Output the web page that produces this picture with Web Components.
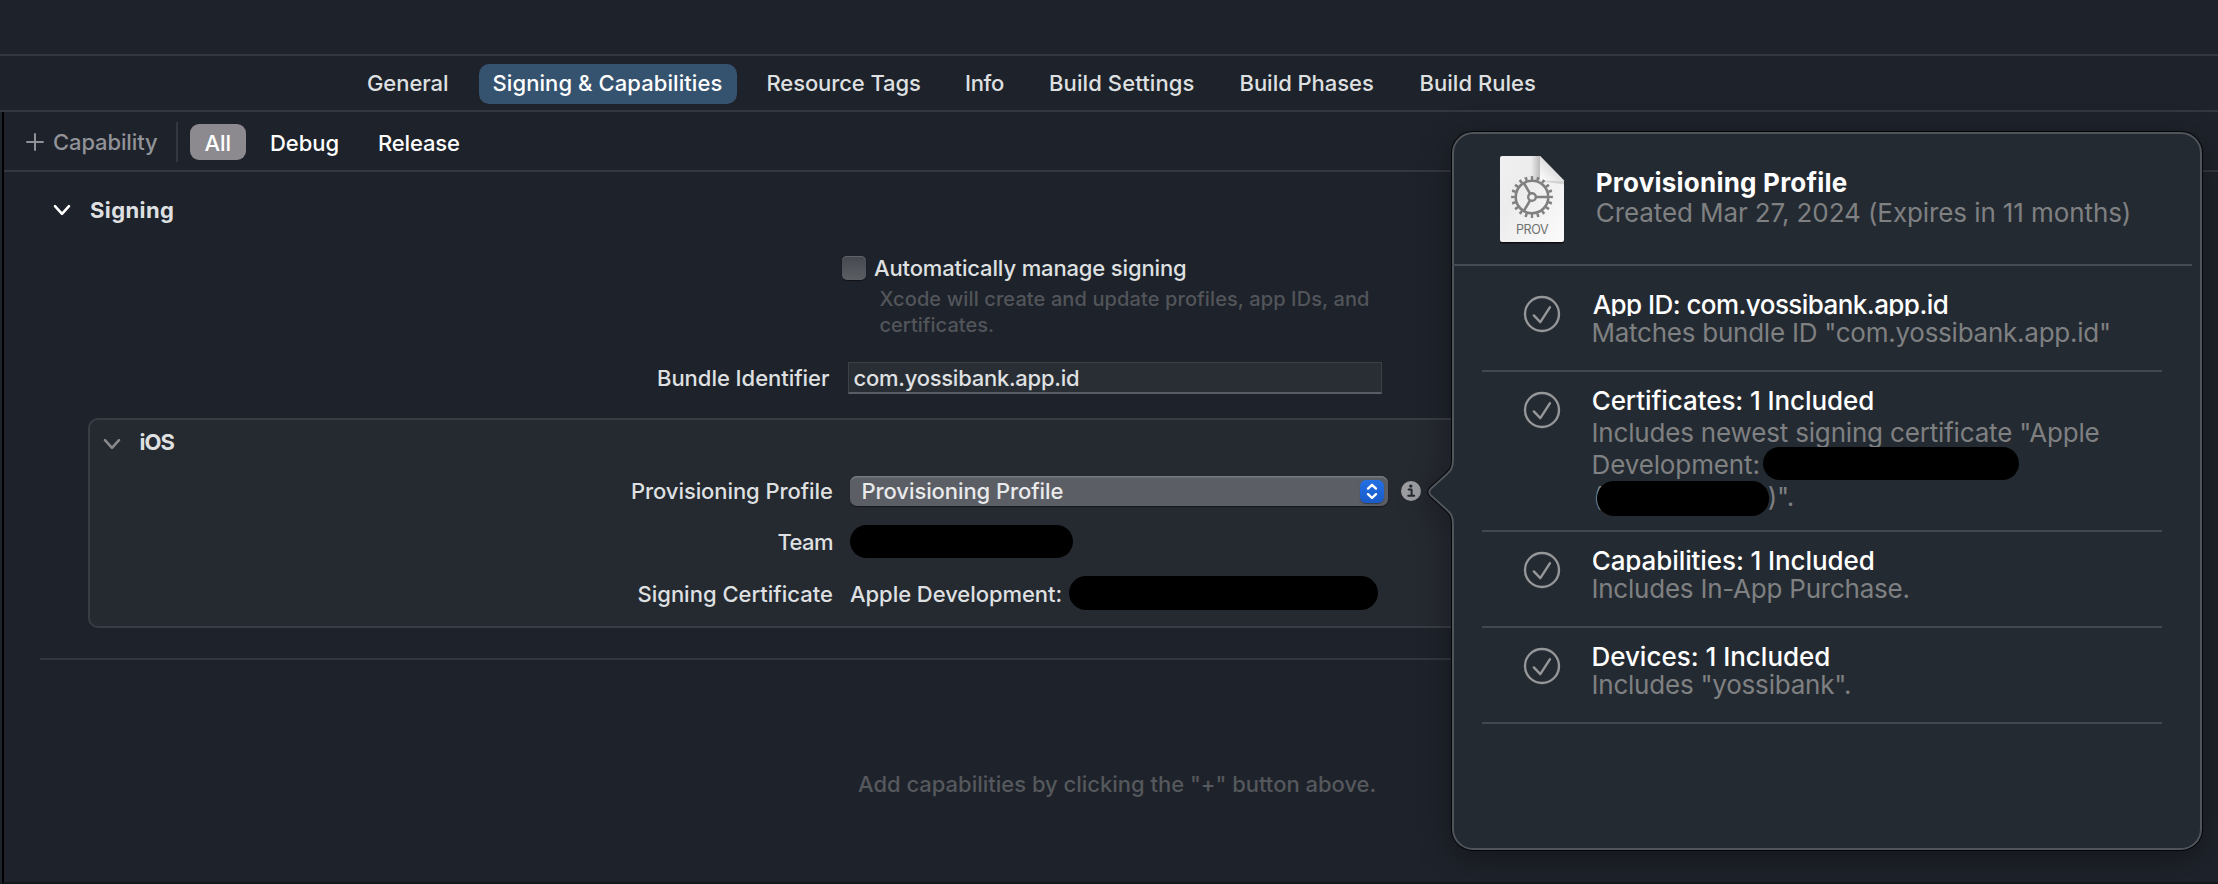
<!DOCTYPE html>
<html lang="en">
<head>
<meta charset="utf-8">
<title>Signing &amp; Capabilities</title>
<style>
html,body{margin:0;padding:0;background:#1e222a;overflow:hidden}
body{width:2218px;height:884px;font-family:Inter,"Liberation Sans",sans-serif;color:#dfe0e1}
</style>
</head>
<body>
<xc-window></xc-window>
<script>
const define = (name, markup, setup) => {
  const tpl = document.createElement('template');
  tpl.innerHTML = markup;
  customElements.define(name, class extends HTMLElement {
    connectedCallback() {
      if (this.shadowRoot) return;
      this.attachShadow({mode: 'open'}).append(tpl.content.cloneNode(true));
      if (setup) setup(this, this.shadowRoot);
    }
  });
};

/* One line of text, tracked so that its ink is exactly `w` pixels wide. */
const ctx = document.createElement('canvas').getContext('2d');
define('xc-label', `<style>
  :host{display:block;flex:none;white-space:nowrap;line-height:26px;height:26px;font-size:22px;font-weight:500}
  :host([big]){font-size:26px;line-height:31px;height:31px;font-weight:400}
  :host([small]){font-size:20px}
  :host([bold]){font-weight:700}
  :host([medium]){font-weight:500}
  span{display:inline-block;white-space:pre}
</style><span><slot></slot></span>`, (el, root) => {
  const w = +el.getAttribute('w'), text = el.textContent, span = root.querySelector('span');
  const cs = getComputedStyle(el);
  ctx.font = `${cs.fontWeight} ${cs.fontSize} ${cs.fontFamily}`;
  const m = ctx.measureText(text);
  const ink = m.actualBoundingBoxRight + m.actualBoundingBoxLeft;
  if (text.length > 1) span.style.letterSpacing = ((w - ink) / (text.length - 1)).toFixed(3) + 'px';
  span.style.marginLeft = m.actualBoundingBoxLeft.toFixed(2) + 'px';
  el.style.width = w + 'px';
});

define('xc-redacted', `<style>:host{display:block;flex:none;background:#000;border-radius:17px}</style>`);

define('xc-chevron', `<style>:host{display:block;flex:none;width:18px;height:12px}svg{display:block}</style>
<svg width="18" height="12" viewBox="0 0 18 12" fill="none" stroke="currentColor" stroke-width="2.6" stroke-linecap="round" stroke-linejoin="round"><path d="M2 2.2 9 9.8 16 2.2"/></svg>`);

define('xc-tab', `<style>
  :host{display:flex;align-items:center;box-sizing:border-box;height:40px;padding-bottom:2px;flex:none}
  :host([selected]){background:#35526f;border-radius:10px;color:#fff}
</style><slot></slot>`);

define('xc-tab-bar', `<style>
  :host{display:flex;align-items:flex-start;box-sizing:border-box;padding:8px 0 0 368px;border:solid #34373f;border-width:2px 0;height:58px}
</style>
<xc-tab><xc-label w="79">General</xc-label></xc-tab>
<xc-tab selected style="margin-left:32px;padding-left:14.5px;width:258px"><xc-label w="228">Signing &amp; Capabilities</xc-label></xc-tab>
<xc-tab style="margin-left:30.5px"><xc-label w="152.5">Resource Tags</xc-label></xc-tab>
<xc-tab style="margin-left:46px"><xc-label w="38">Info</xc-label></xc-tab>
<xc-tab style="margin-left:46px"><xc-label w="143.5">Build Settings</xc-label></xc-tab>
<xc-tab style="margin-left:47px"><xc-label w="132.5">Build Phases</xc-label></xc-tab>
<xc-tab style="margin-left:47.5px"><xc-label w="114.5">Build Rules</xc-label></xc-tab>`);

define('xc-filter-bar', `<style>
  :host{display:flex;align-items:flex-start;height:58px;border-bottom:2px solid #34373f;color:#fff}
  .plus{margin:21px 0 0 22px;width:18px;height:18px;flex:none}
  .cap{margin:17px 0 0 10px;color:#919398}
  .sep{width:2px;height:40px;margin:10px 0 0 18px;background:#34373f}
  .all{display:flex;box-sizing:border-box;width:56px;height:36px;margin:12px 0 0 12px;padding:6px 0 0 14.500px;background:#8c8a8f;border-radius:9px}
</style>
<svg class="plus" viewBox="0 0 18 18" stroke="#8f9196" stroke-width="2" stroke-linecap="round"><path d="M9 1v16M1 9h16"/></svg>
<xc-label class="cap" w="104">Capability</xc-label>
<div class="sep"></div>
<div class="all"><xc-label w="25">All</xc-label></div>
<xc-label style="margin:18px 0 0 25px" w="67.5">Debug</xc-label>
<xc-label style="margin:18px 0 0 40.5px" w="80">Release</xc-label>`);

define('xc-checkbox', `<style>
  :host{display:block;flex:none;box-sizing:border-box;width:24px;height:24px;border-radius:5px;background:linear-gradient(#45484e,#5b5e63);box-shadow:inset 0 1px 0 #606369,0 1px 1px #101216}
</style>`);

define('xc-popup-button', `<style>
  :host{display:flex;flex:none;box-sizing:border-box;width:538px;height:30px;padding:2px 0 0 13px;border-radius:7px;background:#5c5e66;box-shadow:inset 0 1.5px 0 #777980,0 1px 1px #15171b;color:#e9eaeb}
  .step{margin:4px 4px 0 auto;width:24px;height:23px;margin-top:2px;border-radius:6px;background:linear-gradient(#2470e4,#195bc8);box-shadow:0 1px 1px #3b3d44}
  svg{display:block}
</style><slot></slot>
<div class="step"><svg width="24" height="23" viewBox="0 0 24 23" fill="none" stroke="#fff" stroke-width="2.4" stroke-linecap="round" stroke-linejoin="round"><path d="M8 8.6 12 4.8l4 3.8M8 14.2l4 3.8 4-3.8"/></svg></div>`);

define('xc-info', `<style>:host{display:block;flex:none;width:20px;height:20px}svg{display:block}</style>
<svg width="20" height="20" viewBox="0 0 20 20"><circle cx="10" cy="10" r="10" fill="#9d9ea1"/><circle cx="9.8" cy="5.1" r="1.7" fill="#252930"/><path d="M7.6 8.6h3v6M7.2 14.7h6" fill="none" stroke="#252930" stroke-width="2" stroke-linejoin="round" stroke-linecap="round"/></svg>`);

define('xc-row', `<style>
  :host{display:grid;grid-template-columns:var(--label-end) 1fr;column-gap:18px;align-items:start}
  .l{display:flex;justify-content:flex-end}
  .c{display:flex;align-items:flex-start}
</style><div class="l"><slot name="label"></slot></div><div class="c"><slot></slot></div>`);

define('xc-signing', `<style>
  :host{display:block}
  .head{display:flex;align-items:flex-start;padding:25px 0 0 49px;color:#dfe0e1}
  .head xc-chevron{margin-top:6.500px;color:#fff}
  .head xc-label{margin-left:19px}
  .auto{display:flex;align-items:flex-start;margin:32px 0 0 838px}
  .auto xc-checkbox{margin-top:1px}
  .auto xc-label{margin-left:8px}
  .hint{margin:5px 0 0 875.5px;color:#52555a}
  .bundle{--label-end:826px;margin-top:24px}
  .bundle xc-label{margin-top:3px}
  .field{box-sizing:border-box;width:534px;height:32px;padding-left:5.5px;background:#292d34;border:1px solid #3d4147;border-bottom:2px solid #5a5e64;margin-left:0}
  .field xc-label{margin-top:2px}
  .box{--label-end:742px;box-sizing:border-box;height:210px;margin:24px 36px 0 84px;border:2px solid #383c43;border-radius:10px;background:#252930}
  .box xc-row{column-gap:17.500px}
  .ios{display:flex;padding:9px 0 0 13px}
  .ios xc-chevron{margin-top:8.500px;color:#88898c}
  .ios xc-label{margin-left:19.5px}
  hr{height:2px;margin:30px 36px 0;border:0;background:#32363e}
  .add{margin:111px 0 0 854px;color:#55585c}
</style>
<div class="head"><xc-chevron></xc-chevron><xc-label bold w="83">Signing</xc-label></div>
<div class="auto"><xc-checkbox></xc-checkbox><xc-label w="312">Automatically manage signing</xc-label></div>
<div class="hint"><xc-label small w="489">Xcode will create and update profiles, app IDs, and</xc-label><xc-label small w="113.500">certificates.</xc-label></div>
<xc-row class="bundle"><xc-label slot="label" w="172">Bundle Identifier</xc-label><div class="field"><xc-label w="223.5">com.yossibank.app.id</xc-label></div></xc-row>
<div class="box">
  <div class="ios"><xc-chevron></xc-chevron><xc-label bold w="34">iOS</xc-label></div>
  <xc-row style="margin-top:21px"><xc-label slot="label" w="200" style="margin-top:2px">Provisioning Profile</xc-label><xc-popup-button><xc-label w="200">Provisioning Profile</xc-label></xc-popup-button><xc-info style="margin:5px 0 0 13px"></xc-info></xc-row>
  <xc-row style="margin-top:19px;height:33px"><xc-label slot="label" w="54.5" style="margin-top:4px">Team</xc-label><xc-redacted style="width:222.500px;height:33px;margin-left:.5px"></xc-redacted></xc-row>
  <xc-row style="margin-top:18px"><xc-label slot="label" w="193.5" style="margin-top:5px">Signing Certificate</xc-label><xc-label w="210.500" style="margin:5px 0 0 .5px">Apple Development:</xc-label><xc-redacted style="width:309px;height:34px;margin-left:8px"></xc-redacted></xc-row>
</div>
<hr>
<xc-label class="add" w="516.5">Add capabilities by clicking the "+" button above.</xc-label>`);

define('xc-check', `<style>:host{display:block;flex:none;width:38px;height:38px}svg{display:block}</style>
<svg width="38" height="38" viewBox="0 0 38 38" fill="none" stroke="#959698" stroke-width="2.4" stroke-linecap="round" stroke-linejoin="round"><circle cx="19" cy="19" r="17"/><path d="M10.8 20.4 17.3 27.2 27 12.2"/></svg>`);

define('xc-check-row', `<style>
  :host{display:flex;align-items:flex-start;box-sizing:border-box;margin:0 40px 0 30px;padding:13px 0 0 40.7px;border-bottom:2px solid #41464f}
  xc-check{margin-top:6px}
  .body{margin-left:32px}
  .title{color:#fff}
  :host([clip]) .title{height:27px;overflow:hidden;margin-bottom:4px}
  .detail{color:#7f8081;padding-left:.8px}
</style><xc-check></xc-check><div class="body"><div class="title"><slot name="title"></slot></div><div class="detail"><slot></slot></div></div>`);

define('xc-profile-icon', `<style>:host{display:block;flex:none;width:67px;height:90px}svg{display:block}</style>
<svg width="67" height="90" viewBox="0 0 67 90">
<defs><linearGradient id="p" x1="0" y1="0" x2="1" y2="1"><stop offset="0" stop-color="#f1f1f1"/><stop offset=".35" stop-color="#ececec"/><stop offset="1" stop-color="#fbfbfb"/></linearGradient>
<linearGradient id="f" x1="0" y1="1" x2=".55" y2=".45"><stop offset="0" stop-color="#fff"/><stop offset="1" stop-color="#dcdcdc"/></linearGradient>
<linearGradient id="s" x1="0" x2="1"><stop offset="0" stop-color="#000" stop-opacity="0"/><stop offset="1" stop-color="#000" stop-opacity=".22"/></linearGradient></defs>
<path d="M3 1.5h37.5L65 26v59.500a2 2 0 0 1-2 2H3a2 2 0 0 1-2-2V3.500a2 2 0 0 1 2-2Z" fill="#0c0e12"/>
<path d="M3 0h38L65 24.500V84a2 2 0 0 1-2 2H3a2 2 0 0 1-2-2V2a2 2 0 0 1 2-2Z" fill="url(#p)"/>
<path d="M32 0h9v24h-9Z" fill="url(#s)"/><path d="M41 24.500h24v4L41 25Z" fill="#000" opacity=".12"/>
<path d="M41 0 65 24.500H43a2 2 0 0 1-2-2Z" fill="url(#f)"/>
<g fill="none" stroke="#808080"><circle cx="33" cy="41" r="16.300" stroke-width="2.600"/>
<circle cx="33" cy="41" r="19" stroke-width="3.800" pathLength="200" stroke-dasharray="4.200 5.800" stroke-dashoffset="2.100"/>
<circle cx="33" cy="41" r="3.800" stroke-width="2.400"/><path d="M37 41h12M31 37.500 24.800 27M31 44.500 24.800 55" stroke-width="2.500"/></g>
<text x="17" y="78" font-family="Inter,sans-serif" font-size="12.500" fill="#707070" textLength="32.500">PROV</text></svg>`);

define('xc-popover', `<style>
  :host{position:absolute;left:1420px;top:124px;width:798px;height:760px}
  .bg{position:absolute;inset:0;overflow:visible;filter:drop-shadow(0 8px 16px rgba(0,0,0,.32))}
  .content{position:relative;margin:8px 16px 0 32px}
  .head{display:flex;align-items:flex-start;box-sizing:border-box;height:134px;margin-right:10px;padding:24px 0 0 46.5px;border-bottom:2px solid #464c55}
  .names{margin:11px 0 0 31.3px}
  .names xc-label[bold]{color:#fff}
  .names xc-label:last-child{color:#7f8081;margin-top:-1px}
  .line{display:flex;align-items:flex-start;height:32px}
</style>
<svg class="bg" width="798" height="760" viewBox="1420 124 798 760">
<defs><path id="o" d="M1473 133H2181a20 20 0 0 1 20 20V829a20 20 0 0 1-20 20H1473a20 20 0 0 1-20-20V524C1453 516 1450.500 513 1446.500 509.500L1431 495.500Q1427.500 492 1431 488.500L1446.500 474.500C1450.500 471 1453 468 1453 460V153a20 20 0 0 1 20-20Z"/></defs>
<use href="#o" fill="#242a32" stroke="#050607" stroke-width="4"/><use href="#o" fill="#242a32" stroke="#50545b" stroke-width="2"/></svg>
<div class="content">
<div class="head"><xc-profile-icon></xc-profile-icon><div class="names"><xc-label big bold w="250">Provisioning Profile</xc-label><xc-label big w="532">Created Mar 27, 2024 (Expires in 11 months)</xc-label></div></div>
<xc-check-row clip style="height:106px;padding-top:23px"><xc-label slot="title" big medium w="355">App ID: com.yossibank.app.id</xc-label><xc-label big w="515.5" style="margin-top:-3px">Matches bundle ID "com.yossibank.app.id"</xc-label></xc-check-row>
<xc-check-row style="height:160px"><xc-label slot="title" big medium w="280.500">Certificates: 1 Included</xc-label>
<div style="display:flex;height:32px;margin-top:1px"><xc-label big w="505">Includes newest signing certificate "Apple</xc-label></div>
<div style="display:flex;height:32px;align-items:flex-start"><xc-label big w="165">Development:</xc-label><xc-redacted style="width:256px;height:32.500px;margin:-2px 0 0 5px"></xc-redacted></div>
<div style="display:flex;height:32px;align-items:flex-start"><xc-label big w="6" style="margin-left:1.800px">(</xc-label><xc-redacted style="width:171.500px;height:34.500px;margin:0 0 0 -4px"></xc-redacted><xc-label big w="24" style="margin-left:0">)".</xc-label></div></xc-check-row>
<xc-check-row clip style="height:96px"><xc-label slot="title" big medium w="281">Capabilities: 1 Included</xc-label><xc-label big w="315" style="margin-top:-3px">Includes In-App Purchase.</xc-label></xc-check-row>
<xc-check-row clip style="height:96px"><xc-label slot="title" big medium w="236" style="margin-left:.7px">Devices: 1 Included</xc-label><xc-label big w="256.5" style="margin-top:-3px">Includes "yossibank".</xc-label></xc-check-row>
</div>`);

define('xc-window', `<style>
  :host{display:flex;flex-direction:column;position:relative;width:2218px;height:884px;background:#1e222a;overflow:hidden}
  .title{height:54px;flex:none}
  xc-tab-bar{flex:none;box-sizing:border-box}
  .work{flex:1;box-sizing:border-box;margin-left:2px;border-left:2px solid #000;border-bottom:2px solid #15171c}
</style>
<div class="title"></div><xc-tab-bar></xc-tab-bar>
<div class="work"><xc-filter-bar></xc-filter-bar><xc-signing></xc-signing></div>
<xc-popover></xc-popover>`);
</script>
</body>
</html>
